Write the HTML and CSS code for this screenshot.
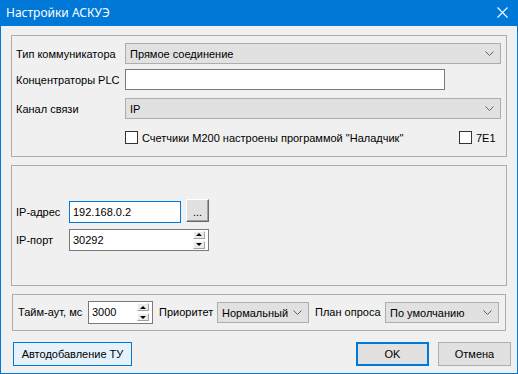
FILE: index.html
```html
<!DOCTYPE html>
<html lang="ru">
<head>
<meta charset="utf-8">
<title>Настройки АСКУЭ</title>
<link rel="stylesheet" href="styles.css">
</head>
<body>
<div class="window">
  <div class="titlebar">
    <span class="title">Настройки АСКУЭ</span>
    <svg class="close" width="11" height="11" viewBox="0 0 11 11"><path d="M0.5 0.5 L10.5 10.5 M10.5 0.5 L0.5 10.5" stroke="#fff" stroke-width="1.1" fill="none"/></svg>
  </div>
  <div class="content">
    <div class="group g1">
      <div class="row r1">
        <span class="lbl w109">Тип коммуникатора</span>
        <div class="combo w376"><span>Прямое соединение</span><svg class="chev" width="9" height="5" viewBox="0 0 9 5"><path d="M0.5 0.5 L4.5 4.5 L8.5 0.5" fill="none" stroke="#606060"/></svg></div>
      </div>
      <div class="row r2">
        <span class="lbl w109">Концентраторы PLC</span>
        <div class="edit w320"></div>
      </div>
      <div class="row r3">
        <span class="lbl w109">Канал связи</span>
        <div class="combo w376"><span>IP</span><svg class="chev" width="9" height="5" viewBox="0 0 9 5"><path d="M0.5 0.5 L4.5 4.5 L8.5 0.5" fill="none" stroke="#606060"/></svg></div>
      </div>
      <div class="row r4">
        <div class="check w334"><span class="box"></span><span>Счетчики М200 настроены программой "Наладчик"</span></div>
        <div class="check"><span class="box"></span><span>7E1</span></div>
      </div>
    </div>

    <div class="group g2">
      <div class="row r5">
        <span class="lbl w53">IP-адрес</span>
        <div class="edit focus w112"><span>192.168.0.2</span></div>
        <div class="dots">...</div>
      </div>
      <div class="row r6">
        <span class="lbl w53">IP-порт</span>
        <div class="edit spin w140"><span>30292</span>
          <div class="arrows"><span class="up"><i></i></span><span class="down"><i></i></span></div>
        </div>
      </div>
    </div>

    <div class="group g3">
      <span class="lbl w70">Тайм-аут, мс</span>
      <div class="edit spin w65"><span>3000</span>
        <div class="arrows"><span class="up"><i></i></span><span class="down"><i></i></span></div>
      </div>
      <span class="lbl w58 ml6">Приоритет</span>
      <div class="combo w92"><span>Нормальный</span><svg class="chev" width="9" height="5" viewBox="0 0 9 5"><path d="M0.5 0.5 L4.5 4.5 L8.5 0.5" fill="none" stroke="#606060"/></svg></div>
      <span class="lbl w70 ml6">План опроса</span>
      <div class="combo w114"><span>По умолчанию</span><svg class="chev" width="9" height="5" viewBox="0 0 9 5"><path d="M0.5 0.5 L4.5 4.5 L8.5 0.5" fill="none" stroke="#606060"/></svg></div>
    </div>

    <div class="buttons">
      <div class="btn auto">Автодобавление ТУ</div>
      <div class="btn ok">OK</div>
      <div class="btn cancel">Отмена</div>
    </div>
  </div>
</div>
</body>
</html>
```
FILE: styles.css
```css
* { box-sizing: border-box; }
html, body { margin: 0; padding: 0; background: #fff; }
body {
  font-family: "Liberation Sans", Arial, sans-serif;
  font-size: 11px;
  color: #000;
}
.window {
  width: 518px;
  height: 374px;
  background: #f0f0f0;
  border: 1px solid #0078d7;
  border-top: none;
  overflow: hidden;
}
.titlebar {
  height: 26px;
  margin: 0 -1px;
  background: #0078d7;
  display: flex;
  align-items: center;
  padding-left: 6px;
  padding-right: 10px;
}
.title {
  font-family: "Noto Sans", "Open Sans", sans-serif;
  font-size: 12px;
  color: #fff;
  flex: 1;
  margin-top: -1px;
}
.close { display: block; margin-top: -1px; }
.content {
  padding: 9px 0 0 10px;
}
.group {
  border: 1px solid #adadad;
  width: 496px;
}
.g1 {
  height: 122px;
  padding: 7px 0 0 4px;
}
.row { display: flex; align-items: center; }
.r1, .r2, .r3 { height: 21px; }
.r2 { margin-top: 5px; }
.r3 { margin-top: 8px; }
.r4 { margin-top: 12px; height: 13px; padding-left: 109px; }
.lbl { flex-shrink: 0; white-space: nowrap; }
.w109 { width: 109px; }
.w53 { width: 53px; }
.w70 { width: 70px; }
.w58 { width: 58px; }
.ml6 { margin-left: 6px; }
.combo {
  height: 21px;
  border: 1px solid #adadad;
  background: #e1e1e1;
  display: flex;
  align-items: center;
  justify-content: space-between;
  padding: 0 6px 0 4px;
  white-space: nowrap;
}
.chev { display: block; flex-shrink: 0; }
.w376 { width: 376px; }
.w320 { width: 320px; }
.w92 { width: 92px; }
.w114 { width: 114px; }
.w112 { width: 112px; }
.w140 { width: 140px; }
.w65 { width: 65px; }
.w334 { width: 334px; }
.edit {
  height: 21px;
  border: 1px solid #7a7a7a;
  background: #fff;
  display: flex;
  align-items: center;
  padding-left: 3px;
  padding-bottom: 1px;
}
.edit.focus { border-color: #0078d7; height: 22px; }
.check { display: flex; align-items: center; height: 13px; }
.box {
  width: 13px;
  height: 13px;
  border: 1px solid #333;
  background: #fff;
  margin-right: 4px;
  flex-shrink: 0;
}
.g2 {
  height: 121px;
  margin-top: 8px;
  padding: 34px 0 0 4px;
}
.r5 { height: 23px; align-items: flex-end; }
.r5 .lbl { align-self: center; }
.dots {
  width: 23px;
  height: 23px;
  margin-left: 5px;
  margin-bottom: 0;
  background: #e1e1e1;
  border: 1px solid;
  border-color: #fff #696969 #696969 #fff;
  box-shadow: inset -1px -1px 0 #a0a0a0;
  display: flex;
  align-items: center;
  justify-content: center;
  padding-top: 2px;
  font-size: 11px;
  align-self: flex-start;
  margin-top: -1px;
}
.r6 { margin-top: 6px; height: 22px; }
.spin { justify-content: space-between; padding-right: 3px; height: 22px; }
.arrows {
  display: flex;
  flex-direction: column;
  justify-content: center;
  gap: 2px;
  width: 12px;
}
.arrows span {
  display: flex;
  align-items: center;
  justify-content: center;
  height: 8px;
  background: #ececec;
  border: 1px solid;
  border-color: #fbfbfb #a0a0a0 #a0a0a0 #fbfbfb;
}
.arrows i {
  display: block;
  width: 0;
  height: 0;
  border-left: 3px solid transparent;
  border-right: 3px solid transparent;
}
.arrows .up i { border-bottom: 3px solid #000; }
.arrows .down i { border-top: 3px solid #000; }
.g3 {
  width: 494px;
  height: 37px;
  margin: 8px 0 0 1px;
  padding: 6px 0 0 5px;
  display: flex;
  align-items: flex-start;
}
.g3 .lbl { height: 22px; line-height: 22px; }
.g3 .spin { height: 23px; }
.g3 .combo { margin-top: 1px; }
.buttons {
  width: 500px;
  margin-top: 11px;
  display: flex;
  align-items: center;
}
.btn {
  height: 24px;
  width: 73px;
  display: flex;
  align-items: center;
  justify-content: center;
  background: #e1e1e1;
  border: 1px solid #adadad;
  white-space: nowrap;
}
.btn.auto {
  width: 119px;
  margin-left: 2px;
  background: #e5f1fb;
  border-color: #0078d7;
}
.btn.ok {
  margin-left: auto;
  border: 2px solid #0078d7;
}
.btn.cancel { margin-left: 9px; }
```
